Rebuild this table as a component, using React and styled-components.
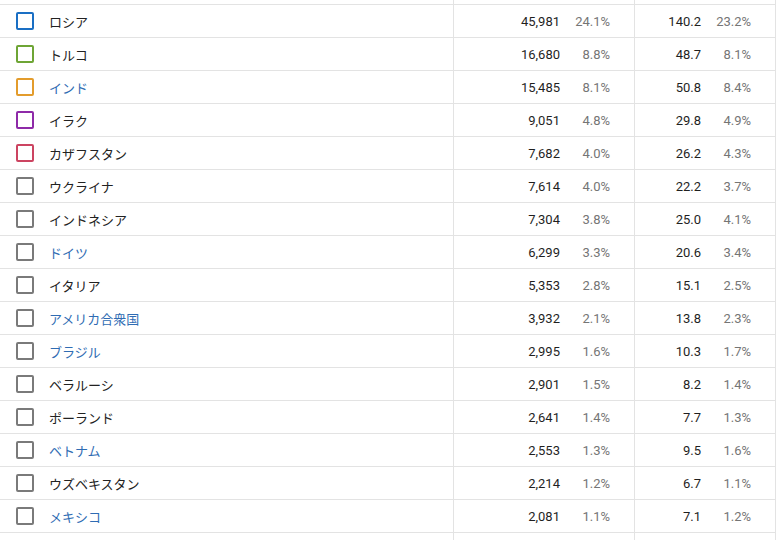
import React from 'react';
import styled, { createGlobalStyle } from 'styled-components';

const GlobalStyle = createGlobalStyle`
  html, body {
    margin: 0;
    padding: 0;
    background: #fff;
  }
`;

const rows = [
  { name: 'ロシア', link: false, color: '#1a6fc4', users: '45,981', usersPct: '24.1%', value: '140.2', valuePct: '23.2%' },
  { name: 'トルコ', link: false, color: '#6ea535', users: '16,680', usersPct: '8.8%', value: '48.7', valuePct: '8.1%' },
  { name: 'インド', link: true, color: '#e39c2c', users: '15,485', usersPct: '8.1%', value: '50.8', valuePct: '8.4%' },
  { name: 'イラク', link: false, color: '#8e2aa8', users: '9,051', usersPct: '4.8%', value: '29.8', valuePct: '4.9%' },
  { name: 'カザフスタン', link: false, color: '#cc4461', users: '7,682', usersPct: '4.0%', value: '26.2', valuePct: '4.3%' },
  { name: 'ウクライナ', link: false, users: '7,614', usersPct: '4.0%', value: '22.2', valuePct: '3.7%' },
  { name: 'インドネシア', link: false, users: '7,304', usersPct: '3.8%', value: '25.0', valuePct: '4.1%' },
  { name: 'ドイツ', link: true, users: '6,299', usersPct: '3.3%', value: '20.6', valuePct: '3.4%' },
  { name: 'イタリア', link: false, users: '5,353', usersPct: '2.8%', value: '15.1', valuePct: '2.5%' },
  { name: 'アメリカ合衆国', link: true, users: '3,932', usersPct: '2.1%', value: '13.8', valuePct: '2.3%' },
  { name: 'ブラジル', link: true, users: '2,995', usersPct: '1.6%', value: '10.3', valuePct: '1.7%' },
  { name: 'ベラルーシ', link: false, users: '2,901', usersPct: '1.5%', value: '8.2', valuePct: '1.4%' },
  { name: 'ポーランド', link: false, users: '2,641', usersPct: '1.4%', value: '7.7', valuePct: '1.3%' },
  { name: 'ベトナム', link: true, users: '2,553', usersPct: '1.3%', value: '9.5', valuePct: '1.6%' },
  { name: 'ウズベキスタン', link: false, users: '2,214', usersPct: '1.2%', value: '6.7', valuePct: '1.1%' },
  { name: 'メキシコ', link: true, users: '2,081', usersPct: '1.1%', value: '7.1', valuePct: '1.2%' },
];

const App = () => {
  return (
    <>
      <GlobalStyle />
      <Viewport>
        <Table>
          <Row $height={4}>
            <NameCell />
            <MetricCell $width={180} />
            <MetricCell $width={140} />
          </Row>
          {rows.map((r) => (
            <Row key={r.name} $height={32}>
              <NameCell>
                <Checkbox $color={r.color} />
                <Name $link={r.link}>{r.name}</Name>
              </NameCell>
              <MetricCell $width={180}>
                <Value>{r.users}</Value>
                <Pct>{r.usersPct}</Pct>
              </MetricCell>
              <MetricCell $width={140}>
                <Value>{r.value}</Value>
                <Pct>{r.valuePct}</Pct>
              </MetricCell>
            </Row>
          ))}
          <Row $height={8} $last>
            <NameCell />
            <MetricCell $width={180} />
            <MetricCell $width={140} />
          </Row>
        </Table>
      </Viewport>
    </>
  );
};

export default App;

const Viewport = styled.div`
  width: 783px;
  height: 540px;
  overflow: hidden;
  background: #fff;
`;

const Table = styled.div`
  display: flex;
  flex-direction: column;
  width: 776px;
`;

const Row = styled.div`
  display: flex;
  height: ${(p) => p.$height}px;
  border-bottom: ${(p) => (p.$last ? 'none' : '1px solid #e3e3e3')};
`;

const NameCell = styled.div`
  width: 454px;
  display: flex;
  align-items: center;
  gap: 15px;
  padding-left: 16px;
  box-sizing: border-box;
  border-right: 1px solid #e3e3e3;
`;

const Checkbox = styled.span`
  width: 18px;
  height: 18px;
  box-sizing: border-box;
  border: 2px solid ${(p) => p.$color || '#7a7a7a'};
  border-radius: 2px;
  flex-shrink: 0;
`;

const Name = styled.span`
  font-family: 'Noto Sans CJK JP', 'Noto Sans', sans-serif;
  font-size: 13px;
  line-height: 1;
  color: ${(p) => (p.$link ? '#2f6cb3' : '#222')};
`;

const MetricCell = styled.div`
  width: ${(p) => p.$width - 24}px;
  display: flex;
  align-items: center;
  justify-content: flex-end;
  padding-right: 24px;
  border-right: 1px solid #e3e3e3;
  font-family: Roboto, 'Liberation Sans', sans-serif;
  font-size: 13px;
`;

const Value = styled.span`
  color: #1f1f1f;
`;

const Pct = styled.span`
  width: 50px;
  text-align: right;
  color: #757575;
`;
